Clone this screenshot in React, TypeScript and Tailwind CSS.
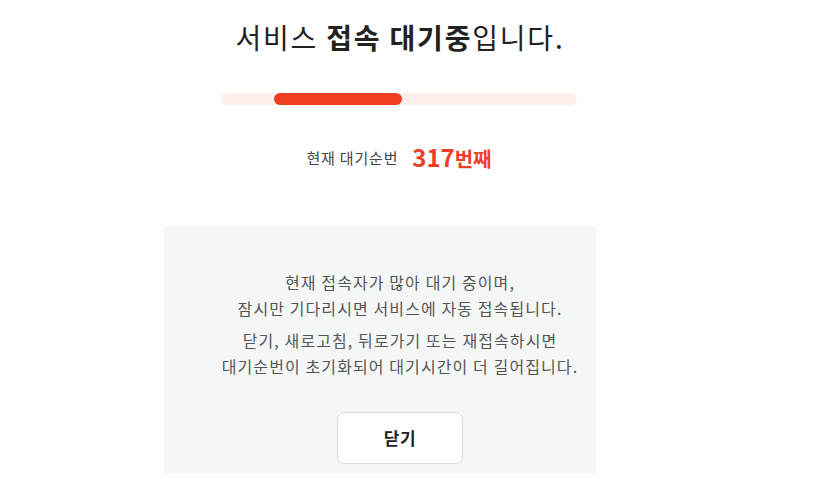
import React from 'react';

const font = { fontFamily: '"Noto Sans CJK KR", "Noto Sans", sans-serif' };

const App: React.FC = () => {
  return (
    <div className="w-[813px] h-[479px] bg-white overflow-hidden" style={font}>
      {/* Heading */}
      <div className="pt-[17px] pr-[13px] h-[57px] text-center text-[28px] leading-[40px] tracking-[1.8px] text-[#222]">
        서비스 <span className="font-bold">접속 대기중</span>입니다.
      </div>

      {/* Progress */}
      <div className="mt-[36px] ml-[221px] w-[356px] h-[12px] rounded-full bg-[#fcefeb] relative">
        <div className="absolute left-[53px] top-0 h-[12px] w-[128px] rounded-full bg-[#f03d22]"></div>
      </div>

      {/* Queue number */}
      <div className="mt-[38px] pr-[15px] h-[30px] flex items-center justify-center gap-[14px]">
        <span className="text-[15px] tracking-[0.8px] text-[#444]">현재 대기순번</span>
        <span className="text-[#ef3e27] font-bold flex items-baseline">
          <span className="text-[24px] leading-[30px]">317</span>
          <span className="text-[20px] leading-[30px]">번째</span>
        </span>
      </div>

      {/* Notice box */}
      <div className="mt-[53px] ml-[164px] w-[432px] h-[247px] bg-[#f5f7f7] pl-[40px] pt-[43px] text-center">
        <div className="text-[16px] leading-[26px] tracking-[1.1px] text-[#555]">
          <p>현재 접속자가 많아 대기 중이며,</p>
          <p>잠시만 기다리시면 서비스에 자동 접속됩니다.</p>
          <p className="mt-[6px]">닫기, 새로고침, 뒤로가기 또는 재접속하시면</p>
          <p>대기순번이 초기화되어 대기시간이 더 길어집니다.</p>
        </div>
        <button className="mt-[33px] w-[126px] h-[52px] bg-white border border-[#dcdcdc] rounded-[7px] text-[17px] font-bold tracking-[0.5px] text-[#222]">
          닫기
        </button>
      </div>
    </div>
  );
};

export default App;
